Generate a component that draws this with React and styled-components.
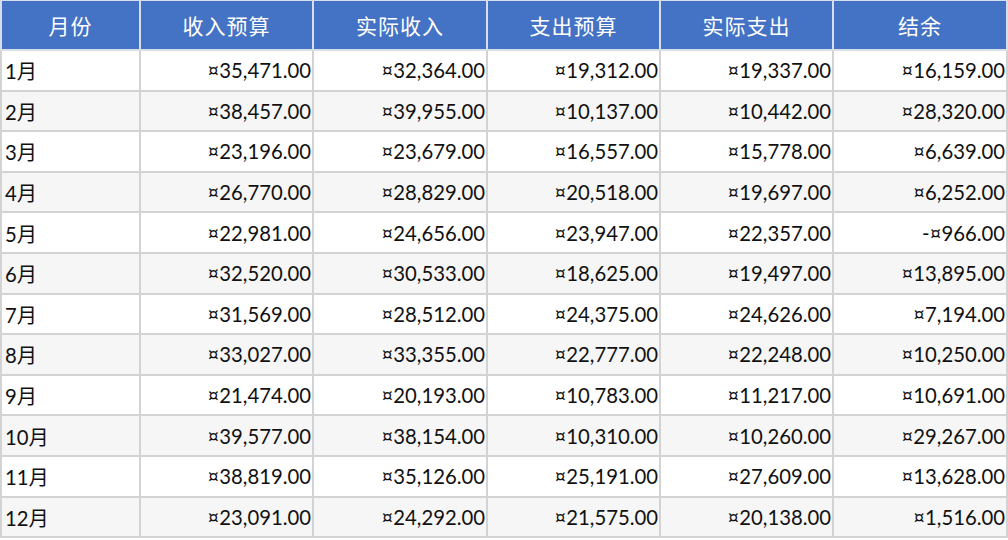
import React from "react";
import styled, { createGlobalStyle } from "styled-components";

const Global = createGlobalStyle`
  html, body { margin: 0; padding: 0; background: #ffffff; }
  body { font-family: Lato, "Noto Sans CJK SC", sans-serif; }
`;

const Table = styled.table`
  width: 1006px;
  table-layout: fixed;
  border-collapse: collapse;
  font-family: Lato, "Noto Sans CJK SC", sans-serif;
  font-size: 20.3px;
  color: #111;
`;

const HeadCell = styled.th`
  height: 48px;
  padding: 0;
  background: #4472c4;
  color: #ffffff;
  font-weight: 400;
  text-align: center;
  border: 2px solid #d8dfeb;
  border-top-width: 1px;
  font-family: "Noto Sans CJK SC", sans-serif;
  font-size: 21px;
  letter-spacing: 1px;
`;

const Row = styled.tr`
  background: ${(p) => (p.$alt ? "#f6f6f6" : "#ffffff")};
`;

const Cell = styled.td`
  height: 38.6px;
  padding: 0;
  padding-left: ${(p) => (p.$left ? "3px" : "0")};
  padding-right: ${(p) => (p.$left ? "0" : "1px")};
  text-align: ${(p) => (p.$left ? "left" : "right")};
  border: 2px solid #d3d3d3;
  white-space: nowrap;
`;

const widths = [139, 173, 174, 173, 173, 174];
const headers = ["月份", "收入预算", "实际收入", "支出预算", "实际支出", "结余"];

const data = [
  ["1月", "¤35,471.00", "¤32,364.00", "¤19,312.00", "¤19,337.00", "¤16,159.00"],
  ["2月", "¤38,457.00", "¤39,955.00", "¤10,137.00", "¤10,442.00", "¤28,320.00"],
  ["3月", "¤23,196.00", "¤23,679.00", "¤16,557.00", "¤15,778.00", "¤6,639.00"],
  ["4月", "¤26,770.00", "¤28,829.00", "¤20,518.00", "¤19,697.00", "¤6,252.00"],
  ["5月", "¤22,981.00", "¤24,656.00", "¤23,947.00", "¤22,357.00", "-¤966.00"],
  ["6月", "¤32,520.00", "¤30,533.00", "¤18,625.00", "¤19,497.00", "¤13,895.00"],
  ["7月", "¤31,569.00", "¤28,512.00", "¤24,375.00", "¤24,626.00", "¤7,194.00"],
  ["8月", "¤33,027.00", "¤33,355.00", "¤22,777.00", "¤22,248.00", "¤10,250.00"],
  ["9月", "¤21,474.00", "¤20,193.00", "¤10,783.00", "¤11,217.00", "¤10,691.00"],
  ["10月", "¤39,577.00", "¤38,154.00", "¤10,310.00", "¤10,260.00", "¤29,267.00"],
  ["11月", "¤38,819.00", "¤35,126.00", "¤25,191.00", "¤27,609.00", "¤13,628.00"],
  ["12月", "¤23,091.00", "¤24,292.00", "¤21,575.00", "¤20,138.00", "¤1,516.00"],
];

export default function App() {
  return (
    <>
      <Global />
      <Table>
        <colgroup>
          {widths.map((w, i) => (
            <col key={i} style={{ width: w }} />
          ))}
        </colgroup>
        <thead>
          <tr>
            {headers.map((h) => (
              <HeadCell key={h}>{h}</HeadCell>
            ))}
          </tr>
        </thead>
        <tbody>
          {data.map((row, r) => (
            <Row key={r} $alt={r % 2 === 1}>
              {row.map((v, c) => (
                <Cell key={c} $left={c === 0}>
                  {v}
                </Cell>
              ))}
            </Row>
          ))}
        </tbody>
      </Table>
    </>
  );
}
